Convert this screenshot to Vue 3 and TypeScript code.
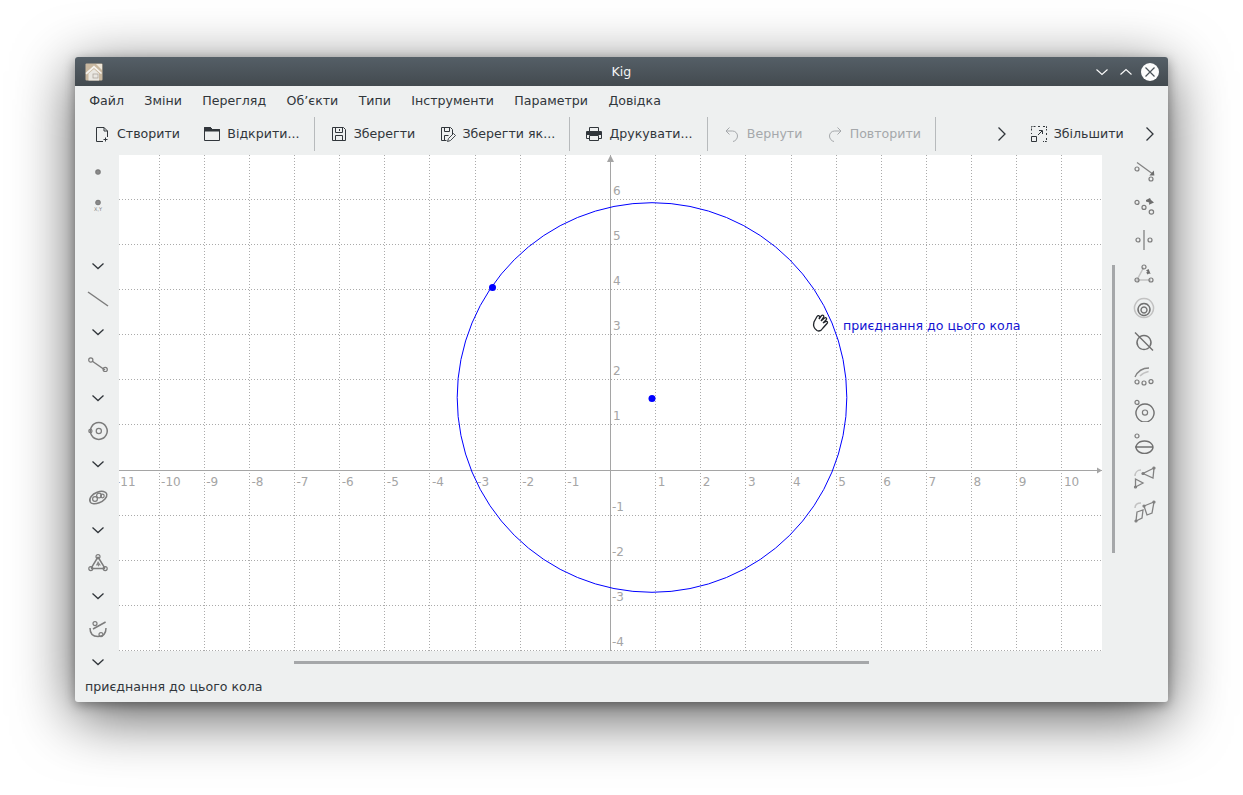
<script setup lang="ts">
interface Glyph {
  d?: string
  light?: string
  solid?: string
  faint?: string
  dots?: number[][]
  label?: string
}

const menus = ['Файл', 'Зміни', 'Перегляд', 'Об’єкти', 'Типи', 'Інструменти', 'Параметри', 'Довідка']

const chevron = 'M6.500 9.500l5.500 5 5.500-5'

const leftItems: Glyph[] = [
  { dots: [[12, 12, 2.2]], solid: 'M12 9.800a2.200 2.200 0 1 0 .01 0z' },
  { dots: [[12, 9.500, 2.2]], solid: 'M12 7.300a2.200 2.200 0 1 0 .01 0z', label: 'X,Y' },
  {},
  { d: chevron },
  { light: 'M2 5L22 19' },
  { d: chevron },
  { light: 'M6 8L19 17', dots: [[4.8, 7, 2.1], [19.2, 16.4, 2.1]] },
  { d: chevron },
  { light: 'M12.8 3.6a8.4 8.4 0 1 1-.01 0z', dots: [[12.8, 12, 2.6], [4.4, 12, 1.6]] },
  { d: chevron },
  { light: 'M4.2 17c-1.8-3.6 2-8 7-9.8 4.6-1.6 9-.8 9.6 2 .6 3-3 6.8-7.6 8.6-4 1.6-8 1.4-9-.8z', dots: [[9, 14, 2.4], [13, 10.6, 2.4], [16.4, 11, 1.8]] },
  { d: chevron },
  { light: 'M12 6L5 17.4M12 6l7 11.4M5 17.4h14', solid: 'M12 10l3 4.4-1.8-.2-.4 1.6-1.2-1.6-1.8.4z', dots: [[12, 5.6, 2], [4.8, 17.6, 2], [19.2, 17.6, 2]] },
  { d: chevron },
  { light: 'M4 11c0 6 3.4 8.6 8 8.6 4.6 0 8-2.6 8-8.6M7 12L19.6 5', dots: [[9, 6.6, 2], [15, 17.6, 2]] },
  { d: chevron }
]

const rightItems: Glyph[] = [
  { light: 'M5 2.5L21.5 14.5', solid: 'M22.4 15.4l-.6-5-4.4 5.2z', dots: [[5, 9, 2], [19, 19, 2]] },
  { solid: 'M14 6l4-2 1 2 3 2.4-5 2.4.2-2.4-3.2-1z', dots: [[5, 8.4, 2], [12, 13.4, 2], [19.4, 18, 2.2]] },
  { light: 'M12 2v20', dots: [[6, 12, 2], [18, 12, 2]] },
  { faint: 'M11.600 5.500L5 18h14', solid: 'M16.6 7l2 5-1.6-.6-1.4 1.2-1.4-2 1.4-.8-1.6-1.4z', dots: [[12, 5, 2], [5, 18, 2], [19, 18, 2]] },
  { d: 'M12 7.500a6 6 0 1 0 .01 0zM12 11a3 3 0 1 0 .01 0z', faint: 'M12 2.500a9.500 9.500 0 1 1-.01 0z' },
  { d: 'M12 5.5a7 7 0 1 1-.01 0zM3 2.5L21 20.5' },
  { light: 'M3 13c2.6-5.6 8-9 14-9', faint: 'M8 12c2.4-2.600 5-4 8.600-4.600', dots: [[5, 18, 2], [12, 19, 2], [19, 17.6, 2]] },
  { d: 'M13 6a9 9 0 1 1-.01 0z', dots: [[13, 14.6, 2.6], [5, 4.4, 2]] },
  { d: 'M3 15h18M12.5 9a8.4 6.2 0 1 1-.01 0z', dots: [[5, 4, 2]] },
  { light: 'M22 2L11 7.500l10 4.500zM3.500 13v8l7.500-4z', faint: 'M3 10c0-3 2-6 6-6', dots: [[22, 2, 1], [11, 7.500, 1], [3.500, 21, 1]] },
  { light: 'M12 6L22 2l-2 11-5 2zM5 12l6-2-1 8-6 3z', faint: 'M3 8c0-3 2-5 6-5', dots: [[22, 2, 1], [4, 21, 1], [12, 6, 1]] }
]

// grid of the kig document: one unit is 45.14px, origin in canvas coordinates
const unit = 45.14
const originX = 491.5
const originY = 315.5

// lines sit on whole pixels, otherwise the dots go blurry
function snap(n: number) {
  return Math.floor(n) + 0.5
}

const gridX = Array.from({ length: 23 }, (_, i) => snap(491.45 + (i - 11) * unit))
const gridY = Array.from({ length: 12 }, (_, i) => snap(315 + (i - 7) * unit))

const labelsX = Array.from({ length: 22 }, (_, i) => i - 11).filter((n) => n !== 0)
  .map((n) => ({ n, x: originX + n * unit + 2 }))
const labelsY = [6, 5, 4, 3, 2, 1, -1, -2, -3, -4]
  .map((n) => ({ n, x: n < 0 ? 493 : 494, y: Math.round(originY - n * unit - 5) }))
</script>

<template>
  <div class="desktop">
    <div class="window">
      <header class="titlebar">
        <svg class="app-icon" width="18" height="18" viewBox="0 0 18 18">
          <rect x="0.5" y="0.5" width="17" height="17" rx="1" fill="#c9b8a0" />
          <path d="M11 1l6 0 0 6z" fill="#efe7da" />
          <path d="M0.5 10L9 2.5l8 7.5-1 1-7-6-7.5 6.500z" fill="#f6f3ee" />
          <path d="M3.5 10.5L9 6l5 4.5v7H3.5z" fill="#e9e7e2" />
          <rect x="8" y="11" width="5" height="4" fill="none" stroke="#a59f96" stroke-width="0.7" />
        </svg>
        <span class="title">Kig</span>
        <div class="win-buttons">
          <svg width="16" height="16" viewBox="0 0 16 16"><path d="M2.5 5.5L8 10.5l5.5-5" fill="none" stroke="#fcfcfc" stroke-width="1.100" /></svg>
          <svg width="16" height="16" viewBox="0 0 16 16"><path d="M2.5 10.5L8 5.5l5.5 5" fill="none" stroke="#fcfcfc" stroke-width="1.100" /></svg>
          <svg class="close" width="18" height="18" viewBox="0 0 18 18"><circle cx="9" cy="9" r="9" fill="#fcfcfc" /><path d="M4.500 4.500l9 9M13.500 4.500l-9 9" stroke="#4a5258" stroke-width="1.200" /></svg>
        </div>
      </header>

      <nav class="menubar">
        <span v-for="m in menus" :key="m" class="menu">{{ m }}</span>
      </nav>

      <div class="toolbar">
        <button class="tool">
          <svg width="16" height="16" viewBox="0 0 16 16"><path d="M2.500 15.500V1.500h7.500l3.500 3.500V11M10 1.500V5h3.500M2.500 15.500H9M11.500 11.500v4M9.500 13.500h4" fill="none" stroke="#31363b" /></svg>
          Створити
        </button>
        <button class="tool">
          <svg width="16" height="16" viewBox="0 0 16 16"><path d="M0.500 14.500V1.500h6l2 2h7v11z" fill="none" stroke="#31363b" /><path d="M0.500 5V1.500h6l2 2h7V5z" fill="#31363b" stroke="#31363b" /></svg>
          Відкрити...
        </button>
        <i class="sep" />
        <button class="tool">
          <svg width="16" height="16" viewBox="0 0 16 16"><path d="M1.500 14.500V1.500h11l2 2v11zM4.500 1.500v5h7v-5M4.500 14.500v-5h7v5M8.500 3v2" fill="none" stroke="#31363b" /></svg>
          Зберегти
        </button>
        <button class="tool">
          <svg width="16" height="16" viewBox="0 0 16 16"><path d="M1.500 14.500V1.500h9l2 2v5M4.500 1.500v4h5v-4M4.500 14.500v-5h4M1.500 14.500h5" fill="none" stroke="#31363b" /><path d="M7.500 15.500l1-3 5-5 2 2-5 5z" fill="none" stroke="#31363b" stroke-width="0.900" /></svg>
          Зберегти як...
        </button>
        <i class="sep" />
        <button class="tool">
          <svg width="16" height="16" viewBox="0 0 16 16"><path d="M3.500 5V1.500h9V5M3.500 12.500h-3V5.500h15v7h-3M3.500 9.500h9v5h-9z" fill="none" stroke="#31363b" /><path d="M1 6h14v3H1z" fill="#31363b" /></svg>
          Друкувати...
        </button>
        <i class="sep" />
        <button class="tool off">
          <svg width="16" height="16" viewBox="0 0 16 16"><path d="M5.500 1.500L2 5l3.500 3.500M2 5h6.500a5 5 0 0 1 5 5c0 2.800-2 5-4.500 5.500" fill="none" stroke="#a5a8ab" /></svg>
          Вернути
        </button>
        <button class="tool off">
          <svg width="16" height="16" viewBox="0 0 16 16"><path d="M10.500 1.500L14 5l-3.500 3.500M14 5H7.500a5 5 0 0 0-5 5c0 2.800 2 5 4.500 5.500" fill="none" stroke="#a5a8ab" /></svg>
          Повторити
        </button>
        <i class="sep" />
        <span class="spacer" />
        <svg class="more first" width="16" height="16" viewBox="0 0 16 16"><path d="M4.500 1.500L11 8l-6.500 6.500" fill="none" stroke="#31363b" stroke-width="1.300" /></svg>
        <button class="tool">
          <svg width="16" height="16" viewBox="0 0 16 16"><path d="M4.500 .5h-4v4M7 .5h3M12 .5h3.500v4M15.500 7v3M15.500 12v3.500H12M.5 7v1" fill="none" stroke="#31363b" stroke-dasharray="2 1" /><path d="M.5 10.500h5v5h-5zM7 9l4-4M8 4.500h3.500V8" fill="none" stroke="#31363b" /></svg>
          Збільшити
        </button>
        <svg class="more" width="16" height="16" viewBox="0 0 16 16"><path d="M4.500 1.500L11 8l-6.500 6.500" fill="none" stroke="#31363b" stroke-width="1.300" /></svg>
      </div>

      <main class="workspace">
        <aside class="side left">
          <div v-for="(g, i) in leftItems" :key="i" class="slot" :class="{ gap: !g.d && !g.light && !g.dots }">
            <svg width="24" height="24" viewBox="0 0 24 24">
              <path v-if="g.solid" :d="g.solid" fill="#8a8a8a" />
              <path v-if="g.light" :d="g.light" fill="none" stroke="#7c7c7c" stroke-width="1.500" />
              <path v-if="g.d" :d="g.d" fill="none" stroke="#31363b" stroke-width="1.300" />
              <circle v-for="(p, j) in g.dots" :key="j" :cx="p[0]" :cy="p[1]" :r="p[2]" fill="none" stroke="#7c7c7c" stroke-width="1.200" />
              <text v-if="g.label" x="12" y="17.500" class="xy">{{ g.label }}</text>
            </svg>
          </div>
        </aside>

        <section class="center">
          <div class="canvas">
            <svg width="983" height="496" viewBox="0 0 983 496">
              <g class="grid">
                <line v-for="x in gridX" :key="'v' + x" :x1="x" :x2="x" y1="0" y2="496" />
                <line v-for="y in gridY" :key="'h' + y" x1="0" x2="983" :y1="y" :y2="y" />
              </g>
              <g class="axis">
                <line :x1="originX" :x2="originX" y1="3" y2="496" />
                <line x1="0" x2="983" :y1="originY" :y2="originY" />
              </g>
              <path class="arrow" :d="`M${originX} 0l-3.500 7h7z`" />
              <path class="arrow" :d="`M983 ${originY}l-5-3v6z`" />
              <text v-for="l in labelsX" :key="'lx' + l.n" class="tick" :x="l.x" :y="originY + 15">{{ l.n }}</text>
              <text v-for="l in labelsY" :key="'ly' + l.n" class="tick" :x="l.x" :y="l.y">{{ l.n }}</text>
              <circle cx="533" cy="242.500" r="194.800" fill="none" stroke="#0000ff" />
              <circle cx="533" cy="243.500" r="3.500" fill="#0000ff" />
              <circle cx="373.500" cy="132.500" r="3.500" fill="#0000ff" />
              <path d="M698 175.500C695 173.500 694 170.500 695 167L698 161.500C699 160 701 160.500 700.500 162.500L700 164 702.500 160.500C704 159.500 705.500 161 704.500 162.500L702 166 705.500 163C707 162 708.500 163.500 707 165L704 168 707 166.500C708.500 166 709 167.500 708 168.500L704 173C702.500 175.500 700 176.500 698 175.500z" fill="#fff" stroke="#20242a" stroke-width="1.300" />
              <text class="hint" x="724" y="175">приєднання до цього кола</text>
            </svg>
          </div>
          <div class="hscroll"><div class="hthumb" /></div>
        </section>

        <div class="vscroll"><div class="vthumb" /></div>

        <aside class="side right">
          <div v-for="(g, i) in rightItems" :key="i" class="slot tall">
            <svg width="24" height="24" viewBox="0 0 24 24">
              <path v-if="g.faint" :d="g.faint" fill="none" stroke="#c2c2c2" stroke-width="1.500" />
              <path v-if="g.light" :d="g.light" fill="none" stroke="#828282" stroke-width="1.300" />
              <path v-if="g.d" :d="g.d" fill="none" stroke="#707070" stroke-width="1.400" />
              <path v-if="g.solid" :d="g.solid" fill="#6d6d6d" />
              <circle v-for="(p, j) in g.dots" :key="j" :cx="p[0]" :cy="p[1]" :r="p[2]" fill="none" stroke="#7c7c7c" stroke-width="1.200" />
            </svg>
          </div>
        </aside>
      </main>

      <footer class="statusbar">приєднання до цього кола</footer>
    </div>
  </div>
</template>

<style>
html,
body {
  margin: 0;
  background: #fff;
}
</style>

<style scoped>
.desktop {
  width: 1243px;
  height: 795px;
  padding: 57px 75px 0;
  box-sizing: border-box;
  overflow: hidden;
  background: #fff;
  font-family: "DejaVu Sans", sans-serif;
  font-size: 12.6px;
  color: #31363b;
}

.window {
  width: 1093px;
  height: 645px;
  display: flex;
  flex-direction: column;
  background: #eef0f0;
  border-radius: 3px;
  box-shadow: 0 14px 60px rgba(0, 0, 0, 0.66), 0 3px 12px rgba(0, 0, 0, 0.35);
}

.titlebar {
  height: 29px;
  flex: none;
  display: flex;
  align-items: center;
  position: relative;
  padding: 0 9px 0 10px;
  background: linear-gradient(#555f67, #434a4f);
  border-radius: 3px 3px 0 0;
}

.title {
  position: absolute;
  left: 0;
  right: 0;
  text-align: center;
  color: #f4f5f5;
}

.win-buttons {
  margin-left: auto;
  display: flex;
  align-items: center;
  gap: 8px;
}

.close {
  margin-left: -1px;
}

.menubar {
  height: 28px;
  flex: none;
  display: flex;
  align-items: center;
  padding: 0 4px;
  box-sizing: border-box;
}

.menu {
  padding: 0 10.2px;
}

.toolbar {
  height: 41px;
  flex: none;
  display: flex;
  align-items: center;
  padding: 0 10px 2px 7px;
  box-sizing: border-box;
}

.tool {
  display: flex;
  align-items: center;
  gap: 7px;
  padding: 0 12.3px 0 12px;
  height: 34px;
  border: 0;
  background: none;
  font: inherit;
  color: inherit;
  white-space: nowrap;
}

.tool.off {
  color: #a5a8ab;
}

.sep {
  width: 1px;
  height: 34px;
  margin: 0 4px 0 2px;
  background: #b7babc;
}

.spacer {
  flex: 1;
}

.more {
  flex: none;
  margin-left: 6px;
}

.more.first {
  margin: 0 9px 0 0;
}

.workspace {
  height: 517px;
  flex: none;
  display: flex;
}

.side {
  flex: none;
  display: flex;
  flex-direction: column;
  align-items: center;
}

.side.left {
  width: 44px;
  padding: 0 0 0 2px;
  box-sizing: border-box;
}

.side.right {
  width: 48px;
}

.slot {
  height: 33px;
  flex: none;
  display: flex;
  align-items: center;
  justify-content: center;
}

.slot.gap {
  height: 28px;
}

.slot.tall {
  height: 34px;
}

.xy {
  font-size: 5px;
  text-anchor: middle;
  fill: #808080;
}

.center {
  width: 983px;
  flex: none;
  display: flex;
  flex-direction: column;
}

.canvas {
  height: 496px;
  flex: none;
  background: #fff;
  overflow: hidden;
}

.canvas svg {
  display: block;
}

.grid line {
  stroke: #aaa;
  stroke-dasharray: 1 2;
}

.axis line {
  stroke: #a5a5a5;
}

.arrow {
  fill: #a5a5a5;
}

.tick {
  font-size: 12px;
  fill: #a5a5a5;
}

.hint {
  font-size: 12.6px;
  fill: #1414d2;
}

.hscroll {
  flex: 1;
  padding: 10px 0 0 175px;
}

.hthumb {
  width: 575px;
  height: 3px;
  background: #a5a7a9;
}

.vscroll {
  width: 18px;
  flex: none;
  padding: 110px 0 0 10px;
  box-sizing: border-box;
}

.vthumb {
  width: 3px;
  height: 288px;
  background: #a5a7a9;
}

.statusbar {
  flex: 1;
  padding: 7px 10px 0;
}
</style>
